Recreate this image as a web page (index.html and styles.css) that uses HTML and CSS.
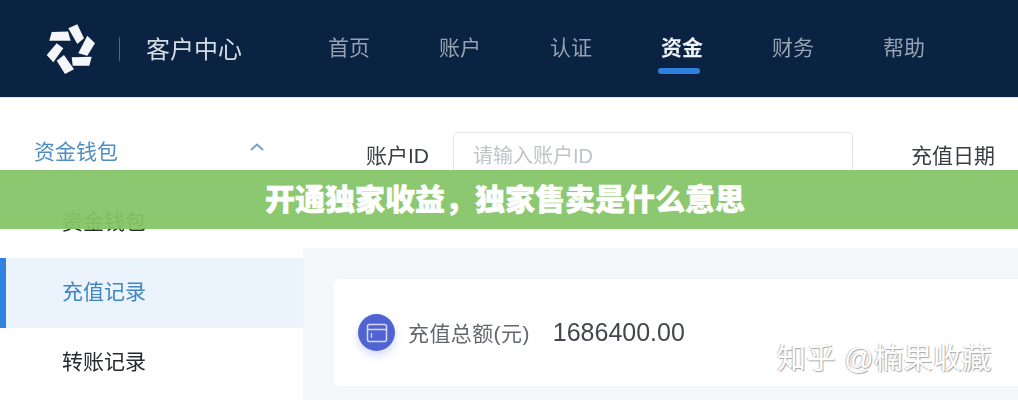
FILE: index.html
```html
<!DOCTYPE html>
<html lang="zh-CN">
<head>
    <meta charset="UTF-8">
    <meta name="viewport" content="width=device-width, initial-scale=1.0">
    <title>开通独家收益，独家售卖是什么意思</title>
    <link rel="stylesheet" href="styles.css">
</head>
<body>
    <div class="shot">
        <header class="topbar">
            <svg class="logo" viewBox="0 0 50 50" width="50" height="50">
                <path d="M5.7 8 L22 7.5 L24.7 16.7 L3.3 16.7 Z" fill="#f4f6f8"/>
                <path d="M22.3 4.3 L31.3 0.3 L38 14.3 L31.3 20 Z" fill="#f4f6f8"/>
                <path d="M41.3 11.7 L49 19.3 L41.3 31.7 L32.3 29.3 Z" fill="#f4f6f8"/>
                <path d="M25.7 33.3 L45.7 32.7 L43.3 41.7 L26.7 41.7 Z" fill="#f4f6f8"/>
                <path d="M10.7 36.7 L18 31 L28 45.3 L19 50 Z" fill="#f4f6f8"/>
                <path d="M0.7 31 L10.7 19.3 L17.3 24.3 L7.3 38.3 Z" fill="#f4f6f8"/>
            </svg>
            <span class="topbar-line"></span>
            <span class="topbar-title">客户中心</span>
            <nav class="nav">
                <a class="nav-item">首页</a>
                <a class="nav-item">账户</a>
                <a class="nav-item">认证</a>
                <a class="nav-item active">资金</a>
                <a class="nav-item">财务</a>
                <a class="nav-item">帮助</a>
            </nav>
        </header>
        <div class="page">
            <aside class="sidebar">
                <div class="side-group">
                    <span>资金钱包</span>
                    <svg class="chevron" viewBox="0 0 14 8" width="14" height="8">
                        <path d="M1 7 L7 1.5 L13 7" fill="none" stroke="#6f9fc4" stroke-width="1.8"/>
                    </svg>
                </div>
                <div class="side-item">资金钱包</div>
                <div class="side-item active">充值记录</div>
                <div class="side-item">转账记录</div>
            </aside>
            <main class="main">
                <div class="filters">
                    <label class="filter-label">账户ID</label>
                    <div class="input">请输入账户ID</div>
                    <label class="filter-label date">充值日期</label>
                </div>
                <div class="content">
                    <div class="card">
                        <span class="card-icon">
                            <svg viewBox="0 0 22 20" width="22" height="20">
                                <rect x="1.5" y="1.5" width="19" height="17" rx="2" fill="none" stroke="#d5daf5" stroke-width="1.5"/>
                                <path d="M1.5 6.5 H20.5" stroke="#d5daf5" stroke-width="1.5"/>
                                <path d="M5.5 10 V15" stroke="#d5daf5" stroke-width="1.3"/>
                            </svg>
                        </span>
                        <span class="card-label">充值总额(元)</span>
                        <span class="card-value">1686400.00</span>
                    </div>
                </div>
            </main>
        </div>
    </div>
    <div class="watermark">知乎 @楠果收藏</div>
    <div class="banner">开通独家收益，独家售卖是什么意思</div>
</body>
</html>
```

FILE: styles.css
```css
* {
    box-sizing: border-box;
}

html, body {
    margin: 0;
    height: 400px;
    overflow: hidden;
}

body {
    position: relative;
    background-color: #fff;
    font-family: 'Liberation Sans', 'Noto Sans CJK SC', sans-serif;
}

.shot {
    height: 400px;
    filter: blur(0.5px);
}

.topbar {
    display: flex;
    align-items: center;
    height: 98px;
    padding-left: 46px;
    background-color: #0a2342;
    border-bottom: 1px solid #dfeaf5;
}

.logo {
    flex: none;
}

.topbar-line {
    width: 1px;
    height: 24px;
    margin-left: 23px;
    background-color: #51667f;
}

.topbar-title {
    margin-left: 26px;
    padding-bottom: 3px;
    font-size: 24px;
    color: #d6dce3;
}

.nav {
    display: flex;
    gap: 69px;
    margin-left: 86px;
    padding-bottom: 5px;
}

.nav-item {
    position: relative;
    font-size: 21px;
    color: #97a2b0;
}

.nav-item.active {
    color: #eef2f6;
    font-weight: 700;
}

.nav-item.active::after {
    content: "";
    position: absolute;
    left: -3px;
    right: 3px;
    bottom: -13px;
    height: 6px;
    border-radius: 3px;
    background-color: #2f7fdc;
}

.page {
    display: flex;
    height: 302px;
}

.sidebar {
    flex: none;
    width: 303px;
    padding-top: 20px;
}

.side-group {
    display: flex;
    align-items: center;
    justify-content: space-between;
    height: 68px;
    margin-bottom: 2px;
    padding: 0 39px 4px 34px;
    font-size: 21px;
    color: #4f8dc2;
}

.chevron {
    margin-bottom: 6px;
}

.side-item {
    display: flex;
    align-items: center;
    height: 70px;
    padding: 0 0 6px 62px;
    font-size: 21px;
    color: #26292e;
}

.side-item.active {
    color: #3f86c2;
    background-color: #ebf3fc;
    border-left: 6px solid #2f82e0;
    padding-left: 56px;
}

.main {
    flex: 1;
    display: flex;
    flex-direction: column;
}

.filters {
    display: flex;
    align-items: center;
    height: 150px;
    padding: 0 0 36px 63px;
}

.filter-label {
    padding-bottom: 2px;
    font-size: 21px;
    color: #3a3d42;
}

.filter-label.date {
    margin-left: 58px;
    white-space: nowrap;
}

.input {
    display: flex;
    align-items: center;
    width: 400px;
    height: 46px;
    margin-left: 24px;
    padding: 0 0 2px 19px;
    border: 1px solid #e3e5e8;
    border-radius: 4px;
    font-size: 20px;
    color: #c0c3c8;
}

.content {
    flex: 1;
    padding: 31px 0 0 31px;
    background-color: #f5f6f8;
}

.card {
    display: flex;
    align-items: center;
    height: 107px;
    padding-left: 24px;
    background-color: #fff;
    border-radius: 6px 0 0 6px;
}

.card-icon {
    display: flex;
    align-items: center;
    justify-content: center;
    width: 37px;
    height: 37px;
    border-radius: 50%;
    background-color: #4f63d2;
    box-shadow: 0 4px 8px rgba(79, 99, 210, 0.25);
}

.card-label {
    margin-left: 13px;
    padding-bottom: 2px;
    font-size: 21px;
    letter-spacing: 0.4px;
    color: #63666b;
}

.card-value {
    margin-left: 23px;
    font-size: 25px;
    color: #44474b;
}

.watermark {
    position: absolute;
    top: 335px;
    left: 777px;
    font-size: 29px;
    letter-spacing: 0.4px;
    white-space: nowrap;
    color: #fff;
    text-shadow: 1px 1px 1px #a8a8a8, -1px 0 1px #c4c4c4;
}

.banner {
    position: absolute;
    top: 170px;
    left: 0;
    right: 0;
    height: 59px;
    padding-right: 8px;
    line-height: 59px;
    text-align: center;
    font-size: 30px;
    font-weight: 900;
    color: #fff;
    -webkit-text-stroke: 0.5px #fff;
    background-color: rgba(133, 197, 102, 0.94);
}
```
